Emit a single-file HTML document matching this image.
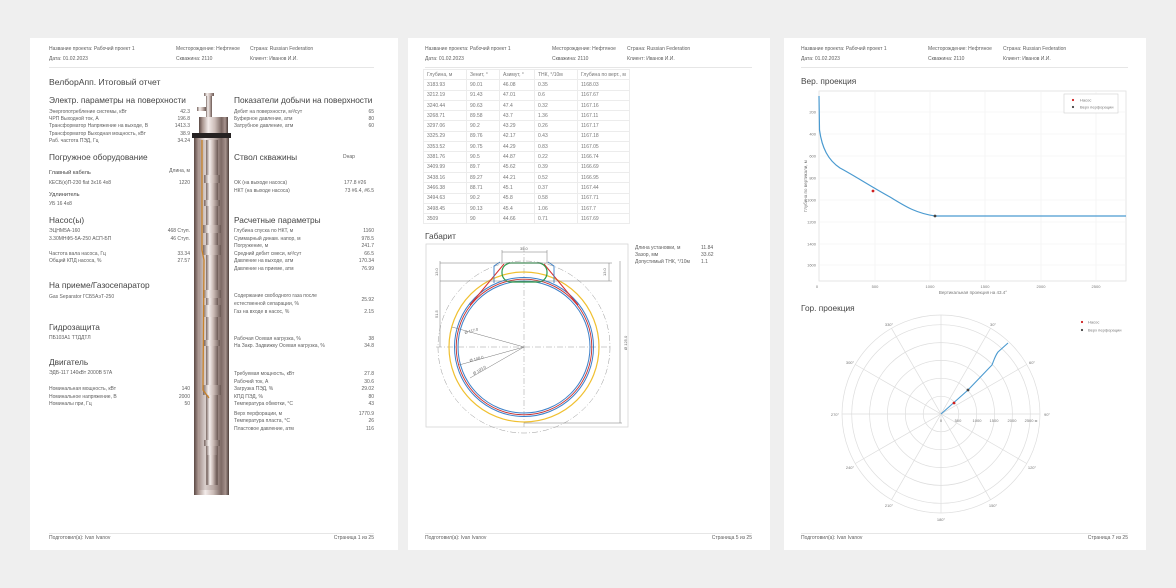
<!DOCTYPE html>
<html><head><meta charset="utf-8">
<style>
*{margin:0;padding:0;box-sizing:border-box}
body{width:1176px;height:588px;background:#efefef;position:relative;overflow:hidden;font-family:"Liberation Sans","Noto Sans CJK SC",sans-serif;color:#555}
.pg{position:absolute;background:#fff;top:38px;height:512px}
.t{position:absolute;white-space:nowrap;font-size:5px;line-height:6px;color:#5e5e5e}
.r{text-align:right}
.h{position:absolute;white-space:nowrap;font-size:8.3px;line-height:10px;color:#444}
.s{position:absolute;white-space:nowrap;font-size:5.6px;line-height:7px;color:#444}
.rule{position:absolute;height:1px;background:#e6e6e6}
table{position:absolute;border-collapse:collapse;font-size:5px;color:#777}
td{border:1px solid #ececec;height:10.3px;padding:0 3px;white-space:nowrap}
svg{position:absolute;left:0;top:0}
</style></head><body>
<div class="pg" style="left:30px;width:368px"></div>
<div class="pg" style="left:408px;width:362px"></div>
<div class="pg" style="left:784px;width:362px"></div>

<svg width="1176" height="588" viewBox="0 0 1176 588">
<defs>
<linearGradient id="bd" x1="0" x2="1" y1="0" y2="0">
<stop offset="0" stop-color="#5a4843"/><stop offset=".12" stop-color="#a8948e"/><stop offset=".32" stop-color="#f3ecea"/><stop offset=".55" stop-color="#cbbcb7"/><stop offset=".78" stop-color="#7a6762"/><stop offset=".9" stop-color="#a8948f"/><stop offset="1" stop-color="#4d3f3b"/></linearGradient>
<linearGradient id="tb" x1="0" x2="1" y1="0" y2="0">
<stop offset="0" stop-color="#7a6863"/><stop offset=".3" stop-color="#f6f0ee"/><stop offset=".6" stop-color="#c9b9b4"/><stop offset="1" stop-color="#6a5853"/></linearGradient>
</defs>
<rect x="206" y="94" width="6" height="24" fill="url(#tb)"/>
<rect x="204" y="93" width="10" height="3" fill="url(#tb)"/>
<rect x="197" y="107" width="9" height="4" fill="url(#tb)"/>
<rect x="199" y="117" width="29" height="18" fill="url(#bd)"/>
<rect x="194" y="135" width="35" height="360" fill="url(#bd)"/>
<rect x="192" y="133" width="39" height="5" fill="#262222"/>
<rect x="199" y="140" width="26" height="350" fill="#8a7772" opacity=".25"/>
<g fill="url(#tb)">
<rect x="206" y="140" width="12" height="345"/>
<rect x="204" y="175" width="16" height="8"/><rect x="204" y="200" width="16" height="6"/>
<rect x="203" y="225" width="18" height="8"/><rect x="203" y="245" width="18" height="10"/>
<rect x="203" y="290" width="18" height="8"/><rect x="203" y="305" width="18" height="12"/>
<rect x="204" y="340" width="16" height="6"/><rect x="203" y="385" width="18" height="10"/>
<rect x="204" y="440" width="16" height="6"/><rect x="207" y="455" width="10" height="30"/>
</g>
<path d="M202 140 L202 250 L204 260 L203 390 L209 398" stroke="#c8822a" stroke-width="1.3" fill="none"/>

<rect x="426" y="244" width="202" height="183" fill="none" stroke="#d0d0d0" stroke-width=".7"/>
<circle cx="524" cy="347" r="86" fill="none" stroke="#999" stroke-width=".5" stroke-dasharray="6 2 1 2"/>
<line x1="436" y1="347" x2="612" y2="347" stroke="#999" stroke-width=".5" stroke-dasharray="6 2 1 2"/>
<line x1="524" y1="246" x2="524" y2="427" stroke="#999" stroke-width=".5" stroke-dasharray="6 2 1 2"/>
<circle cx="524" cy="347" r="75" fill="none" stroke="#f0c030" stroke-width="1.2"/>
<circle cx="524" cy="347" r="69.5" fill="none" stroke="#3a7fc8" stroke-width="1"/>
<circle cx="524" cy="347" r="67.8" fill="none" stroke="#c83030" stroke-width=".9"/>
<circle cx="524" cy="347" r="66" fill="none" stroke="#3a7fc8" stroke-width="1"/>
<path d="M504 264 L470 305 M544 264 L578 305" stroke="#d83030" stroke-width="1"/>
<path d="M494 283 L494 266 L500 262 M554 283 L554 266 L548 262" stroke="#3a7fc8" stroke-width=".9" fill="none"/>
<rect x="502" y="263" width="45" height="19" rx="9" fill="none" stroke="#2a9a4a" stroke-width="1.2"/>
<g stroke="#777" stroke-width=".5" fill="none">
<line x1="440" y1="263" x2="612" y2="263"/><line x1="440" y1="281" x2="612" y2="281"/>
<line x1="502" y1="252" x2="547" y2="252"/><line x1="502" y1="250" x2="502" y2="263"/><line x1="547" y1="250" x2="547" y2="263"/>
<line x1="440" y1="261" x2="440" y2="347"/><line x1="609" y1="263" x2="609" y2="281"/>
<line x1="620" y1="261" x2="620" y2="423"/><line x1="524" y1="423" x2="622" y2="423"/>
<line x1="524" y1="347" x2="452" y2="327"/><line x1="524" y1="347" x2="459" y2="365"/><line x1="524" y1="347" x2="470" y2="378"/>
</g>
<g font-size="4" fill="#666" font-family="Liberation Sans">
<text x="520" y="250">35.0</text>
<text x="465" y="334" transform="rotate(-15 465 334)">Ø 117.0</text>
<text x="470" y="362" transform="rotate(-15 470 362)">Ø 108.0</text>
<text x="474" y="375" transform="rotate(-30 474 375)">Ø 103.0</text>
<text x="627" y="350" transform="rotate(-90 627 350)">Ø 125.0</text>
<text x="606" y="276" transform="rotate(-90 606 276)">13.0</text>
<text x="438" y="276" transform="rotate(-90 438 276)">13.0</text>
<text x="438" y="318" transform="rotate(-90 438 318)">51.5</text>
</g>

<rect x="819" y="91" width="307" height="190" fill="none" stroke="#e0e0e0" stroke-width=".8"/>
<g stroke="#f0f0f0" stroke-width=".6">
<line x1="875" y1="91" x2="875" y2="281"/><line x1="930" y1="91" x2="930" y2="281"/><line x1="985" y1="91" x2="985" y2="281"/><line x1="1041" y1="91" x2="1041" y2="281"/><line x1="1096" y1="91" x2="1096" y2="281"/>
<line x1="819" y1="112" x2="1126" y2="112"/><line x1="819" y1="134" x2="1126" y2="134"/><line x1="819" y1="156" x2="1126" y2="156"/><line x1="819" y1="178" x2="1126" y2="178"/><line x1="819" y1="200" x2="1126" y2="200"/><line x1="819" y1="222" x2="1126" y2="222"/><line x1="819" y1="244" x2="1126" y2="244"/><line x1="819" y1="265" x2="1126" y2="265"/>
</g>
<path d="M819 96 L819.5 130 C822 148 828 160 840 168 C855 176 870 186 890 197 C905 206 915 213 935 216 L1126 216" stroke="#4a9ad0" stroke-width="1.2" fill="none"/>
<circle cx="873" cy="191" r="1.4" fill="#d02020"/><circle cx="935" cy="216" r="1.4" fill="#444"/>
<rect x="1064" y="94" width="54" height="19" fill="#fff" stroke="#d0d0d0" stroke-width=".6"/>
<circle cx="1073" cy="100" r="1.1" fill="#d02020"/><circle cx="1073" cy="107" r="1.1" fill="#444"/>
<g font-size="4" fill="#777" font-family="Liberation Sans">
<text x="1080" y="101.5">Насос</text><text x="1080" y="108.5">Верх перфорации</text>
<text x="817" y="288" text-anchor="middle">0</text><text x="875" y="288" text-anchor="middle">500</text><text x="930" y="288" text-anchor="middle">1000</text><text x="985" y="288" text-anchor="middle">1500</text><text x="1041" y="288" text-anchor="middle">2000</text><text x="1096" y="288" text-anchor="middle">2500</text>
<text x="816" y="113.5" text-anchor="end">200</text><text x="816" y="135.5" text-anchor="end">400</text><text x="816" y="157.5" text-anchor="end">600</text><text x="816" y="179.5" text-anchor="end">800</text><text x="816" y="201.5" text-anchor="end">1000</text><text x="816" y="223.5" text-anchor="end">1200</text><text x="816" y="245.5" text-anchor="end">1400</text><text x="816" y="266.5" text-anchor="end">1600</text>
<text x="973" y="294" text-anchor="middle" font-size="4.5">Вертикальная проекция на 43.4°</text>
<text x="807" y="186" text-anchor="middle" font-size="4.5" transform="rotate(-90 807 186)">Глубина по вертикали, м</text>
</g>

<g fill="none" stroke="#ddd" stroke-width=".7">
<circle cx="941" cy="414" r="17.8"/><circle cx="941" cy="414" r="35.7"/><circle cx="941" cy="414" r="53.6"/><circle cx="941" cy="414" r="71.4"/><circle cx="941" cy="414" r="89.3"/><circle cx="941" cy="414" r="99"/>
<line x1="941" y1="315" x2="941" y2="513"/><line x1="842" y1="414" x2="1040" y2="414"/>
<line x1="990.5" y1="328.3" x2="891.5" y2="499.7"/><line x1="1026.7" y1="364.5" x2="855.3" y2="463.5"/>
<line x1="1026.7" y1="463.5" x2="855.3" y2="364.5"/><line x1="990.5" y1="499.7" x2="891.5" y2="328.3"/>
</g>
<path d="M941 414 L968 390 L992 365 C994 360 995 356 998 352 L1008 343" stroke="#4a9ad0" stroke-width="1.1" fill="none"/>
<circle cx="954" cy="403" r="1.4" fill="#d02020"/><circle cx="968" cy="390" r="1.4" fill="#444"/>
<circle cx="1082" cy="322" r="1.1" fill="#d02020"/><circle cx="1082" cy="330" r="1.1" fill="#444"/>
<g font-size="4" fill="#777" font-family="Liberation Sans" text-anchor="middle">
<text x="1088" y="323.5" text-anchor="start">Насос</text><text x="1088" y="331.5" text-anchor="start">Верх перфорации</text>
<text x="993" y="326">30°</text><text x="1032" y="364">60°</text><text x="1047" y="416">90°</text><text x="1032" y="469">120°</text><text x="993" y="507">150°</text><text x="941" y="521">180°</text><text x="889" y="507">210°</text><text x="850" y="469">240°</text><text x="835" y="416">270°</text><text x="850" y="364">300°</text><text x="889" y="326">330°</text>
<text x="941" y="422">0</text><text x="958" y="422">500</text><text x="977" y="422">1000</text><text x="994" y="422">1500</text><text x="1012" y="422">2000</text><text x="1031" y="422">2500 м</text>
</g>
</svg>

<div class="t" style="left:49px;top:46px">Название проекта: Рабочий проект 1</div>
<div class="t" style="left:49px;top:56px">Дата: 01.02.2023</div>
<div class="t" style="left:176px;top:46px">Месторождение: Нефтяное</div>
<div class="t" style="left:176px;top:56px">Скважина: 2110</div>
<div class="t" style="left:250px;top:46px">Страна: Russian Federation</div>
<div class="t" style="left:250px;top:56px">Клиент: Иванов И.И.</div>
<div class="rule" style="left:49px;top:67px;width:325px"></div>
<div class="t" style="left:425px;top:46px">Название проекта: Рабочий проект 1</div>
<div class="t" style="left:425px;top:56px">Дата: 01.02.2023</div>
<div class="t" style="left:552px;top:46px">Месторождение: Нефтяное</div>
<div class="t" style="left:552px;top:56px">Скважина: 2110</div>
<div class="t" style="left:627px;top:46px">Страна: Russian Federation</div>
<div class="t" style="left:627px;top:56px">Клиент: Иванов И.И.</div>
<div class="rule" style="left:425px;top:67px;width:327px"></div>
<div class="t" style="left:801px;top:46px">Название проекта: Рабочий проект 1</div>
<div class="t" style="left:801px;top:56px">Дата: 01.02.2023</div>
<div class="t" style="left:928px;top:46px">Месторождение: Нефтяное</div>
<div class="t" style="left:928px;top:56px">Скважина: 2110</div>
<div class="t" style="left:1003px;top:46px">Страна: Russian Federation</div>
<div class="t" style="left:1003px;top:56px">Клиент: Иванов И.И.</div>
<div class="rule" style="left:801px;top:67px;width:327px"></div>

<div class="rule" style="left:49px;top:533px;width:325px"></div>
<div class="t" style="left:49px;top:535px">Подготовил(а): Ivan Ivanov</div>
<div class="t r" style="left:274px;width:100px;top:535px">Страница 1 из 25</div>
<div class="rule" style="left:425px;top:533px;width:327px"></div>
<div class="t" style="left:425px;top:535px">Подготовил(а): Ivan Ivanov</div>
<div class="t r" style="left:652px;width:100px;top:535px">Страница 5 из 25</div>
<div class="rule" style="left:801px;top:533px;width:327px"></div>
<div class="t" style="left:801px;top:535px">Подготовил(а): Ivan Ivanov</div>
<div class="t r" style="left:1028px;width:100px;top:535px">Страница 7 из 25</div>

<div class="h" style="left:49px;top:77px;font-size:8.6px">ВелборАпп. Итоговый отчет</div>
<div class="h" style="left:49px;top:95px">Электр. параметры на поверхности</div>
<div class="h" style="left:234px;top:95px">Показатели добычи на поверхности</div>
<div class="t" style="left:49px;top:109px">Энергопотребление системы, кВт</div><div class="t r" style="left:140px;width:50px;top:109px">42.3</div>
<div class="t" style="left:49px;top:116px">ЧРП Выходной ток, А</div><div class="t r" style="left:140px;width:50px;top:116px">196.8</div>
<div class="t" style="left:49px;top:123px">Трансформатор Напряжение на выходе, В</div><div class="t r" style="left:140px;width:50px;top:123px">1413.3</div>
<div class="t" style="left:49px;top:131px">Трансформатор Выходная мощность, кВт</div><div class="t r" style="left:140px;width:50px;top:131px">38.9</div>
<div class="t" style="left:49px;top:138px">Раб. частота ПЭД, Гц</div><div class="t r" style="left:140px;width:50px;top:138px">34.24</div>
<div class="t" style="left:234px;top:109px">Дебит на поверхности, м³/сут</div><div class="t r" style="left:324px;width:50px;top:109px">65</div>
<div class="t" style="left:234px;top:116px">Буферное давление, атм</div><div class="t r" style="left:324px;width:50px;top:116px">80</div>
<div class="t" style="left:234px;top:123px">Затрубное давление, атм</div><div class="t r" style="left:324px;width:50px;top:123px">60</div>

<div class="h" style="left:49px;top:152px">Погружное оборудование</div>
<div class="h" style="left:234px;top:152px">Ствол скважины</div>
<div class="t" style="left:343px;top:154px">Dнар</div>
<div class="s" style="left:49px;top:170px">Главный кабель</div><div class="t r" style="left:140px;width:50px;top:168px">Длина, м</div>
<div class="t" style="left:49px;top:180px">КЕСБ(к)П-230 flat 3x16 4x8</div><div class="t r" style="left:140px;width:50px;top:180px">1220</div>
<div class="s" style="left:49px;top:192px">Удлинитель</div>
<div class="t" style="left:49px;top:201px">УБ 16 4x8</div>
<div class="t" style="left:234px;top:180px">ОК (на выходе насоса)</div><div class="t" style="left:344px;top:180px">177.8 #26</div>
<div class="t" style="left:234px;top:188px">НКТ (на выходе насоса)</div><div class="t r" style="left:314px;width:60px;top:188px">73 #6.4, #6.5</div>

<div class="h" style="left:49px;top:215px">Насос(ы)</div>
<div class="h" style="left:234px;top:215px">Расчетные параметры</div>
<div class="t" style="left:49px;top:228px">ЭЦНМ5А-160</div><div class="t r" style="left:140px;width:50px;top:228px">468 Ступ.</div>
<div class="t" style="left:49px;top:236px">3.30МНФ5-5А-250 АСП-БП</div><div class="t r" style="left:140px;width:50px;top:236px">46 Ступ.</div>
<div class="t" style="left:49px;top:251px">Частота вала насоса, Гц</div><div class="t r" style="left:140px;width:50px;top:251px">33.34</div>
<div class="t" style="left:49px;top:258px">Общий КПД насоса, %</div><div class="t r" style="left:140px;width:50px;top:258px">27.57</div>
<div class="t" style="left:234px;top:228px">Глубина спуска по НКТ, м</div><div class="t r" style="left:324px;width:50px;top:228px">1160</div>
<div class="t" style="left:234px;top:236px">Суммарный динам. напор, м</div><div class="t r" style="left:324px;width:50px;top:236px">978.5</div>
<div class="t" style="left:234px;top:243px">Погружение, м</div><div class="t r" style="left:324px;width:50px;top:243px">241.7</div>
<div class="t" style="left:234px;top:251px">Средний дебит смеси, м³/сут</div><div class="t r" style="left:324px;width:50px;top:251px">66.5</div>
<div class="t" style="left:234px;top:258px">Давление на выходе, атм</div><div class="t r" style="left:324px;width:50px;top:258px">170.34</div>
<div class="t" style="left:234px;top:266px">Давление на приеме, атм</div><div class="t r" style="left:324px;width:50px;top:266px">76.99</div>

<div class="h" style="left:49px;top:280px">На приеме/Газосепаратор</div>
<div class="t" style="left:49px;top:294px">Gas Separator ГСБ5АэТ-250</div>
<div class="t" style="left:234px;top:293px">Содержание свободного газа после</div>
<div class="t" style="left:234px;top:301px">естественной сепарации, %</div><div class="t r" style="left:324px;width:50px;top:297px">25.92</div>
<div class="t" style="left:234px;top:309px">Газ на входе в насос, %</div><div class="t r" style="left:324px;width:50px;top:309px">2.15</div>

<div class="h" style="left:49px;top:322px">Гидрозащита</div>
<div class="t" style="left:49px;top:335px">ПБ103А1 ТТДДТЛ</div>
<div class="t" style="left:234px;top:336px">Рабочая Осевая нагрузка, %</div><div class="t r" style="left:324px;width:50px;top:336px">38</div>
<div class="t" style="left:234px;top:343px">На Закр. Задвижку Осевая нагрузка, %</div><div class="t r" style="left:324px;width:50px;top:343px">34.8</div>

<div class="h" style="left:49px;top:357px">Двигатель</div>
<div class="t" style="left:49px;top:370px">ЭДБ-117 140кВт 2000В 57А</div>
<div class="t" style="left:49px;top:386px">Номинальная мощность, кВт</div><div class="t r" style="left:140px;width:50px;top:386px">140</div>
<div class="t" style="left:49px;top:394px">Номинальное напряжение, В</div><div class="t r" style="left:140px;width:50px;top:394px">2000</div>
<div class="t" style="left:49px;top:401px">Номиналы при, Гц</div><div class="t r" style="left:140px;width:50px;top:401px">50</div>
<div class="t" style="left:234px;top:371px">Требуемая мощность, кВт</div><div class="t r" style="left:324px;width:50px;top:371px">27.8</div>
<div class="t" style="left:234px;top:379px">Рабочий ток, А</div><div class="t r" style="left:324px;width:50px;top:379px">30.6</div>
<div class="t" style="left:234px;top:386px">Загрузка ПЭД, %</div><div class="t r" style="left:324px;width:50px;top:386px">29.02</div>
<div class="t" style="left:234px;top:394px">КПД ПЭД, %</div><div class="t r" style="left:324px;width:50px;top:394px">80</div>
<div class="t" style="left:234px;top:401px">Температура обмотки, °С</div><div class="t r" style="left:324px;width:50px;top:401px">43</div>
<div class="t" style="left:234px;top:411px">Верх перфорации, м</div><div class="t r" style="left:324px;width:50px;top:411px">1770.9</div>
<div class="t" style="left:234px;top:418px">Температура пласта, °С</div><div class="t r" style="left:324px;width:50px;top:418px">26</div>
<div class="t" style="left:234px;top:426px">Пластовое давление, атм</div><div class="t r" style="left:324px;width:50px;top:426px">116</div>

<table style="left:423px;top:69px;width:207px">
<tr><td style="width:43px">Глубина, м</td><td style="width:33px">Зенит, °</td><td style="width:35px">Азимут, °</td><td style="width:43px">ТНК, °/10м</td><td>Глубина по верт., м</td></tr>
<tr><td>3183.93</td><td>90.01</td><td>46.08</td><td>0.35</td><td>1168.03</td></tr>
<tr><td>3212.19</td><td>91.43</td><td>47.01</td><td>0.6</td><td>1167.67</td></tr>
<tr><td>3240.44</td><td>90.63</td><td>47.4</td><td>0.32</td><td>1167.16</td></tr>
<tr><td>3268.71</td><td>89.58</td><td>43.7</td><td>1.36</td><td>1167.11</td></tr>
<tr><td>3297.06</td><td>90.2</td><td>43.29</td><td>0.26</td><td>1167.17</td></tr>
<tr><td>3325.29</td><td>89.76</td><td>42.17</td><td>0.43</td><td>1167.18</td></tr>
<tr><td>3353.52</td><td>90.75</td><td>44.29</td><td>0.83</td><td>1167.05</td></tr>
<tr><td>3381.76</td><td>90.5</td><td>44.87</td><td>0.22</td><td>1166.74</td></tr>
<tr><td>3409.99</td><td>89.7</td><td>45.62</td><td>0.39</td><td>1166.69</td></tr>
<tr><td>3438.16</td><td>89.27</td><td>44.21</td><td>0.52</td><td>1166.95</td></tr>
<tr><td>3466.38</td><td>88.71</td><td>45.1</td><td>0.37</td><td>1167.44</td></tr>
<tr><td>3494.63</td><td>90.2</td><td>45.8</td><td>0.58</td><td>1167.71</td></tr>
<tr><td>3498.45</td><td>90.13</td><td>45.4</td><td>1.06</td><td>1167.7</td></tr>
<tr><td>3509</td><td>90</td><td>44.66</td><td>0.71</td><td>1167.69</td></tr>
</table>
<div class="h" style="left:425px;top:231px">Габарит</div>
<div class="t" style="left:635px;top:245px">Длина установки, м</div><div class="t" style="left:701px;top:245px">11.84</div>
<div class="t" style="left:635px;top:252px">Зазор, мм</div><div class="t" style="left:701px;top:252px">33.62</div>
<div class="t" style="left:635px;top:259px">Допустимый ТНК, °/10м</div><div class="t" style="left:701px;top:259px">1.1</div>

<div class="h" style="left:801px;top:76px">Вер. проекция</div>
<div class="h" style="left:801px;top:303px">Гор. проекция</div>
</body></html>
